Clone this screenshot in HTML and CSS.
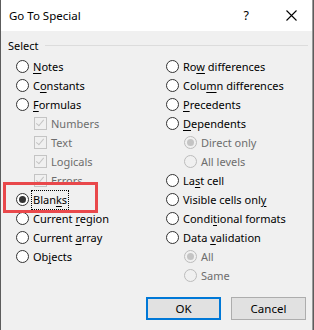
FILE: index.html
```html
<!DOCTYPE html>
<html>
<head>
    <meta charset="UTF-8" />
    <title>Go To Special</title>
    <link rel="stylesheet" href="styles.css">
</head>
<body>
    <div class="dialog">
        <div class="titlebar">
            <span class="title">Go To Special</span>
            <span class="help">?</span>
            <svg class="close" width="11" height="11" viewBox="0 0 11 11">
                <path d="M0.5 0.5 L10.5 10.5 M10.5 0.5 L0.5 10.5" stroke="#000" stroke-width="1.1" fill="none"/>
            </svg>
        </div>

        <div class="group">
            <div class="legend">
                <span>Select</span>
                <div class="rule"></div>
            </div>

            <div class="options">
                <div class="col">
                    <div class="opt"><span class="radio"></span><span><u>N</u>otes</span></div>
                    <div class="opt"><span class="radio"></span><span>C<u>o</u>nstants</span></div>
                    <div class="opt"><span class="radio"></span><span><u>F</u>ormulas</span></div>
                    <div class="opt sub off"><span class="check"></span><span>Numbers</span></div>
                    <div class="opt sub off"><span class="check"></span><span>Text</span></div>
                    <div class="opt sub off"><span class="check"></span><span>Logicals</span></div>
                    <div class="opt sub off"><span class="check"></span><span>Errors</span></div>
                    <div class="opt"><span class="radio on"></span><span class="focus">Blan<u>k</u>s</span></div>
                    <div class="opt"><span class="radio"></span><span>Current <u>r</u>egion</span></div>
                    <div class="opt"><span class="radio"></span><span>Current <u>a</u>rray</span></div>
                    <div class="opt"><span class="radio"></span><span>Ob<u>j</u>ects</span></div>
                </div>
                <div class="col">
                    <div class="opt"><span class="radio"></span><span>Ro<u>w</u> differences</span></div>
                    <div class="opt"><span class="radio"></span><span>Colu<u>m</u>n differences</span></div>
                    <div class="opt"><span class="radio"></span><span><u>P</u>recedents</span></div>
                    <div class="opt"><span class="radio"></span><span><u>D</u>ependents</span></div>
                    <div class="opt sub off"><span class="radio on"></span><span>Direct only</span></div>
                    <div class="opt sub off"><span class="radio"></span><span>All levels</span></div>
                    <div class="opt"><span class="radio"></span><span>La<u>s</u>t cell</span></div>
                    <div class="opt"><span class="radio"></span><span>Visible cells onl<u>y</u></span></div>
                    <div class="opt"><span class="radio"></span><span>Condi<u>t</u>ional formats</span></div>
                    <div class="opt"><span class="radio"></span><span>Data <u>v</u>alidation</span></div>
                    <div class="opt sub off"><span class="radio on"></span><span>All</span></div>
                    <div class="opt sub off"><span class="radio"></span><span>Same</span></div>
                </div>
            </div>
        </div>

        <div class="buttons">
            <button class="btn default">OK</button>
            <button class="btn">Cancel</button>
        </div>

        <div class="highlight"></div>
    </div>
</body>
</html>
```

FILE: styles.css
```css
body {
    margin: 0;
    background: #5c5c5c;
    font-family: "Noto Sans", "Open Sans", sans-serif;
    font-size: 11px;
    color: #000;
}

.dialog {
    position: relative;
    width: 311px;
    height: 330px;
    margin-left: 1px;
    background: #f0f0f0;
    border-right: 1px solid #9a9a9a;
}

.titlebar {
    height: 31px;
    background: #fff;
    display: flex;
    align-items: center;
    padding-left: 8px;
}

.title {
    flex: 1;
    font-size: 11.5px;
}

.help {
    font-size: 12.5px;
    margin-right: 37px;
}

.close {
    margin-right: 15px;
}

.legend {
    display: flex;
    align-items: center;
    height: 18px;
    margin-top: 5px;
    padding-left: 7px;
}

.rule {
    flex: 1;
    height: 1px;
    background: #dcdcdc;
    margin: 0 4px 0 6px;
}

.options {
    display: grid;
    grid-template-columns: 150px 1fr;
    padding-left: 15px;
    margin-top: 3px;
}

.opt {
    height: 19px;
    display: flex;
    align-items: center;
    white-space: nowrap;
}

.opt u {
    text-decoration-thickness: 1px;
    text-underline-offset: 2px;
}

.sub {
    padding-left: 18px;
}

.off {
    color: #6d6d6d;
}

.radio {
    width: 13px;
    height: 13px;
    box-sizing: border-box;
    border: 1px solid #333;
    border-radius: 50%;
    background: #fff;
    margin-right: 4px;
    display: flex;
    align-items: center;
    justify-content: center;
    flex-shrink: 0;
}

.radio.on::after {
    content: "";
    width: 7px;
    height: 7px;
    border-radius: 50%;
    background: #333;
}

.off .radio {
    border-color: #bcbcbc;
    background: #f0f0f0;
}

.off .radio.on::after {
    background: #c4c4c4;
}

.check {
    width: 13px;
    height: 13px;
    box-sizing: border-box;
    border: 1px solid #c4c4c4;
    margin-right: 4px;
    position: relative;
}

.check::after {
    content: "";
    position: absolute;
    left: 3px;
    top: 0px;
    width: 3px;
    height: 7px;
    border: solid #c4c4c4;
    border-width: 0 1px 1px 0;
    transform: rotate(40deg);
}

.focus {
    outline: 1px dotted #000;
    outline-offset: 0;
    padding: 1px 1px 2px 1px;
    margin-left: -1px;
}

.buttons {
    display: flex;
    justify-content: flex-end;
    gap: 10px;
    padding-right: 6px;
    margin-top: 12px;
}

.btn {
    width: 75px;
    height: 23px;
    box-sizing: border-box;
    background: #e1e1e1;
    border: 1px solid #adadad;
    font-family: inherit;
    font-size: 11.5px;
    color: #000;
    padding: 0;
}

.btn.default {
    border: 2px solid #0078d7;
}

.highlight {
    position: absolute;
    left: 2px;
    top: 182px;
    width: 95px;
    height: 31px;
    box-sizing: border-box;
    border: 3px solid #e9484b;
}
```
